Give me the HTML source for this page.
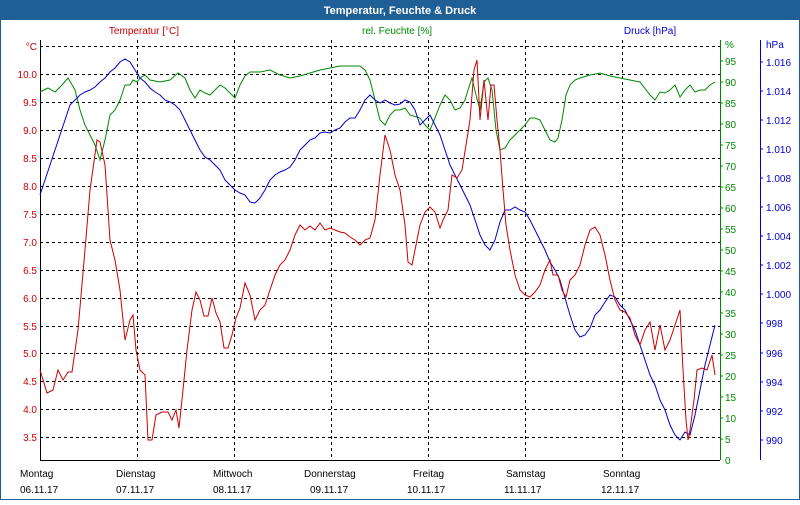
<!DOCTYPE html>
<html><head><meta charset="utf-8"><style>
body{margin:0;width:800px;height:500px;overflow:hidden;background:#fff;font-family:"Liberation Sans",sans-serif}
</style></head><body>
<svg width="800" height="500" xmlns="http://www.w3.org/2000/svg" font-family="Liberation Sans, sans-serif" font-size="10">
<rect x="0" y="0" width="800" height="500" fill="#fff"/>
<rect x="0.5" y="0.5" width="799" height="499" fill="none" stroke="#1f5f96"/>
<rect x="0" y="0" width="800" height="20" fill="#1f5f96"/>
<text x="400" y="14" fill="#fff" font-weight="bold" font-size="11" text-anchor="middle">Temperatur, Feuchte &amp; Druck</text>
<text x="144" y="34" fill="#c00" text-anchor="middle">Temperatur [°C]</text>
<text x="397" y="34" fill="#080" text-anchor="middle">rel. Feuchte [%]</text>
<text x="650" y="34" fill="#00c" text-anchor="middle">Druck [hPa]</text>
<g stroke="#000" stroke-dasharray="3,3" stroke-width="1">
<path d="M40 46.5H720M40 74.5H720M40 102.5H720M40 130.5H720M40 158.5H720M40 186.5H720M40 214.5H720M40 242.5H720M40 270.5H720M40 298.5H720M40 326.5H720M40 353.5H720M40 381.5H720M40 409.5H720M40 437.5H720"/>
<path d="M137.5 40V460M234.5 40V460M331.5 40V460M428.5 40V460M525.5 40V460M622.5 40V460"/>
</g>
<path d="M40.5 40V460.5H720" stroke="#000" fill="none"/>
<path d="M720.5 40V460" stroke="#080"/>
<path d="M760.5 40V460" stroke="#00c"/>
<g fill="#c00" text-anchor="end">
<text x="37" y="50">°C</text><text x="37" y="78">10.0</text><text x="37" y="106">9.5</text><text x="37" y="134">9.0</text><text x="37" y="162">8.5</text><text x="37" y="190">8.0</text><text x="37" y="218">7.5</text><text x="37" y="246">7.0</text><text x="37" y="274">6.5</text><text x="37" y="302">6.0</text><text x="37" y="330">5.5</text><text x="37" y="357">5.0</text><text x="37" y="385">4.5</text><text x="37" y="413">4.0</text><text x="37" y="441">3.5</text>
</g>
<g fill="#080">
<text x="725" y="48">%</text><text x="725" y="65">95</text><text x="725" y="86">90</text><text x="725" y="107">85</text><text x="725" y="128">80</text><text x="725" y="149">75</text><text x="725" y="170">70</text><text x="725" y="191">65</text><text x="725" y="212">60</text><text x="725" y="233">55</text><text x="725" y="254">50</text><text x="725" y="275">45</text><text x="725" y="296">40</text><text x="725" y="317">35</text><text x="725" y="338">30</text><text x="725" y="359">25</text><text x="725" y="380">20</text><text x="725" y="401">15</text><text x="725" y="422">10</text><text x="725" y="443">5</text><text x="725" y="464">0</text>
</g>
<g stroke="#080"><path d="M720 61h3M720 82h3M720 103h3M720 124h3M720 145h3M720 166h3M720 187h3M720 208h3M720 229h3M720 250h3M720 271h3M720 292h3M720 313h3M720 334h3M720 355h3M720 376h3M720 397h3M720 418h3M720 439h3"/></g>
<g fill="#00c">
<text x="766" y="48">hPa</text><text x="766" y="66">1.016</text><text x="766" y="95">1.014</text><text x="766" y="124">1.012</text><text x="766" y="153">1.010</text><text x="766" y="182">1.008</text><text x="766" y="211">1.006</text><text x="766" y="240">1.004</text><text x="766" y="269">1.002</text><text x="766" y="298">1.000</text><text x="766" y="327">998</text><text x="766" y="357">996</text><text x="766" y="386">994</text><text x="766" y="415">992</text><text x="766" y="444">990</text>
</g>
<g stroke="#00c"><path d="M760 62h3M760 91h3M760 120h3M760 149h3M760 178h3M760 207h3M760 236h3M760 265h3M760 294h3M760 323h3M760 353h3M760 382h3M760 411h3M760 440h3"/></g>
<g fill="#000" text-anchor="start">
<text x="20" y="477">Montag</text><text x="20" y="493">06.11.17</text>
<text x="116" y="477">Dienstag</text><text x="116" y="493">07.11.17</text>
<text x="213" y="477">Mittwoch</text><text x="213" y="493">08.11.17</text>
<text x="304" y="477">Donnerstag</text><text x="310" y="493">09.11.17</text>
<text x="413" y="477">Freitag</text><text x="407" y="493">10.11.17</text>
<text x="506" y="477">Samstag</text><text x="504" y="493">11.11.17</text>
<text x="603" y="477">Sonntag</text><text x="601" y="493">12.11.17</text>
</g>
<polyline fill="none" stroke="#080" points="40,92 48,88 55,92 62,85 68,78 75,90 80,110 85,125 90,135 95,145 100,160 105,140 110,115 115,110 120,100 125,85 130,85 133,80 137,82 140,78 145,75 150,80 160,82 170,80 178,73 185,78 190,90 195,98 200,90 205,93 210,95 215,90 220,85 225,88 230,93 235,98 240,85 245,76 250,72 260,72 270,70 280,75 290,78 300,76 310,73 320,70 330,68 340,66 350,66 360,66 365,70 370,80 375,100 380,120 385,125 390,115 395,110 400,110 405,108 410,115 420,118 425,125 430,130 435,118 440,105 445,95 450,100 455,110 460,108 465,100 468,90 472,78 476,95 480,110 484,82 488,78 492,90 496,130 500,150 505,148 510,140 515,135 520,130 525,125 530,118 535,118 540,120 545,130 550,140 555,142 558,138 562,120 566,95 570,85 575,80 580,78 590,75 600,73 610,76 620,78 630,80 640,82 650,95 655,100 660,92 665,93 670,90 675,85 680,97 685,90 690,85 695,92 700,90 705,90 710,85 715,82"/>
<polyline fill="none" stroke="#00c" points="40,195 45,180 50,165 55,150 60,135 65,120 70,105 75,100 80,95 85,92 90,90 95,87 100,82 105,78 110,72 115,68 120,62 125,59 130,62 135,70 140,78 145,82 150,88 155,92 160,95 165,100 170,102 175,105 180,110 185,120 190,130 195,140 200,150 205,157 210,160 215,165 220,170 225,180 230,185 235,190 240,193 245,195 250,202 255,203 260,198 265,190 270,180 275,175 280,172 285,170 290,167 295,160 300,150 305,145 310,140 315,138 320,133 325,132 330,133 335,130 340,128 345,122 350,118 355,118 360,110 365,100 370,95 375,100 380,103 385,100 390,103 395,105 400,104 405,100 410,102 415,110 420,125 425,120 430,115 435,125 440,135 445,150 450,165 455,175 460,185 465,195 470,205 475,220 480,235 485,245 490,250 495,240 500,222 505,210 510,210 515,207 520,210 525,212 530,220 535,230 540,240 545,250 550,262 555,270 560,280 565,298 570,315 575,330 580,337 585,335 590,328 595,315 600,310 605,302 610,295 615,297 620,305 625,310 630,320 635,330 640,345 645,360 650,375 655,385 660,400 665,410 670,425 675,435 680,440 685,432 690,435 695,415 700,390 705,365 710,345 715,325"/>
<polyline fill="none" stroke="#c00" points="40,370 47,393 53,390 58,370 63,380 68,372 72,372 78,330 85,250 90,190 97,140 100,142 105,165 110,240 115,260 120,290 125,340 130,320 133,315 136,350 140,370 145,375 148,440 152,440 156,415 162,412 168,412 172,420 176,410 179,428 183,390 187,350 192,310 196,292 200,300 204,316 208,316 212,298 216,313 220,322 224,348 228,348 232,335 236,318 240,308 245,283 250,295 255,320 260,310 265,305 270,290 275,275 280,265 285,260 290,250 295,235 300,225 305,230 310,226 315,230 320,223 325,230 330,228 335,230 340,232 345,233 350,237 355,240 360,245 365,240 370,238 375,220 380,175 385,135 390,150 395,175 400,190 405,225 408,262 412,265 416,245 420,225 425,212 430,207 435,212 440,228 443,220 448,210 452,175 457,178 462,170 466,145 470,120 474,70 477,60 480,120 484,80 488,120 491,85 494,85 497,120 500,150 503,190 506,225 510,250 515,275 520,290 525,295 530,297 535,292 540,285 545,270 550,260 553,275 558,275 562,290 566,297 570,280 575,275 580,265 585,245 590,230 595,227 600,235 605,255 610,280 615,300 620,310 625,312 630,318 635,335 640,345 645,330 650,322 655,350 660,325 665,350 670,340 675,325 680,310 683,370 686,420 688,440 690,430 694,400 697,370 702,368 707,370 712,355 715,375"/>
</svg>
</body></html>
